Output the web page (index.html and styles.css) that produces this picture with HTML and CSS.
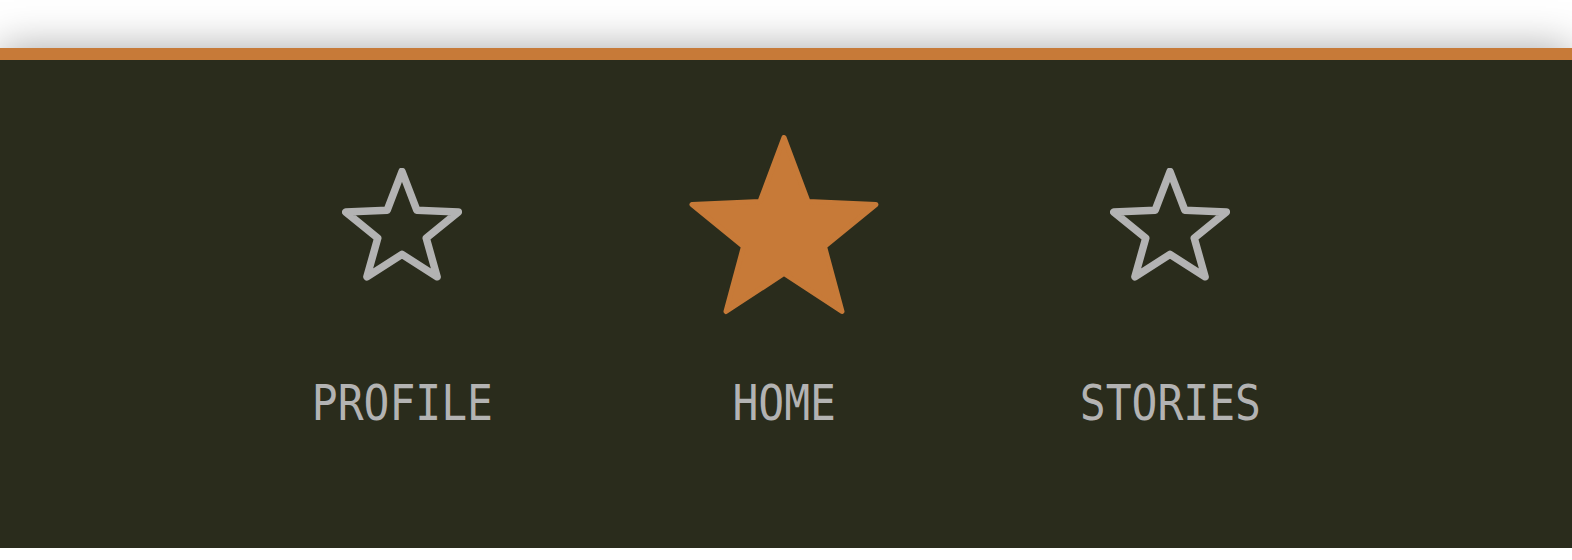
FILE: index.html
```html
<!DOCTYPE html>
<html lang="en">
<head>
<meta charset="utf-8">
<title>Nav</title>
<link rel="stylesheet" href="styles.css">
</head>
<body>
<div class="page">
  <nav class="tabbar">
    <a class="tab" href="#">
      <span class="icon">
        <svg class="star-outline" width="120" height="114" viewBox="-60 -3.5 120 114">
          <polygon points="0,0 14.8,38.7 56.3,40.5 24.2,66.6 35.1,105.3 0,82.9 -35.1,105.3 -24.2,66.6 -56.3,40.5 -14.8,38.7" />
        </svg>
      </span>
      <span class="label">PROFILE</span>
    </a>
    <a class="tab active" href="#">
      <span class="icon">
        <svg class="star-filled" width="190" height="180" viewBox="-95 -2.5 190 180">
          <polygon points="0,0 24,64 92,67 40.5,109 58,174 0,136 -58,174 -40.5,109 -92,67 -24,64" />
        </svg>
      </span>
      <span class="label">HOME</span>
    </a>
    <a class="tab" href="#">
      <span class="icon">
        <svg class="star-outline" width="120" height="114" viewBox="-60 -3.5 120 114">
          <polygon points="0,0 14.8,38.7 56.3,40.5 24.2,66.6 35.1,105.3 0,82.9 -35.1,105.3 -24.2,66.6 -56.3,40.5 -14.8,38.7" />
        </svg>
      </span>
      <span class="label">STORIES</span>
    </a>
  </nav>
</div>
</body>
</html>
```
FILE: styles.css
```css
html, body {
  margin: 0;
  padding: 0;
  background: #ffffff;
  overflow: hidden;
}

.page {
  padding-top: 48px;
}

.tabbar {
  height: 500px;
  border-top: 12px solid #c77a38;
  background: #2a2c1c;
  box-shadow: 0 0 40px rgba(0, 0, 0, 0.35);
  display: grid;
  grid-template-columns: 380px 384px 388px;
  justify-content: center;
  align-content: start;
  padding: 70px 0 0 4px;
  box-sizing: border-box;
}

.tab {
  display: flex;
  flex-direction: column;
  align-items: center;
  text-decoration: none;
}

.icon {
  height: 190px;
  display: flex;
  align-items: center;
  justify-content: center;
}

.icon svg {
  display: block;
}

.star-outline polygon {
  fill: none;
  stroke: #b3b3b3;
  stroke-width: 7.5;
  stroke-linejoin: round;
}

.star-filled polygon {
  fill: #c77a38;
  stroke: #c77a38;
  stroke-width: 5;
  stroke-linejoin: round;
}

.label {
  margin-top: 58px;
  font-family: "DejaVu Sans Mono", "Liberation Mono", monospace;
  font-size: 50px;
  line-height: 1;
  color: #b3b3b3;
  transform: scaleX(0.86);
  white-space: nowrap;
}
```
